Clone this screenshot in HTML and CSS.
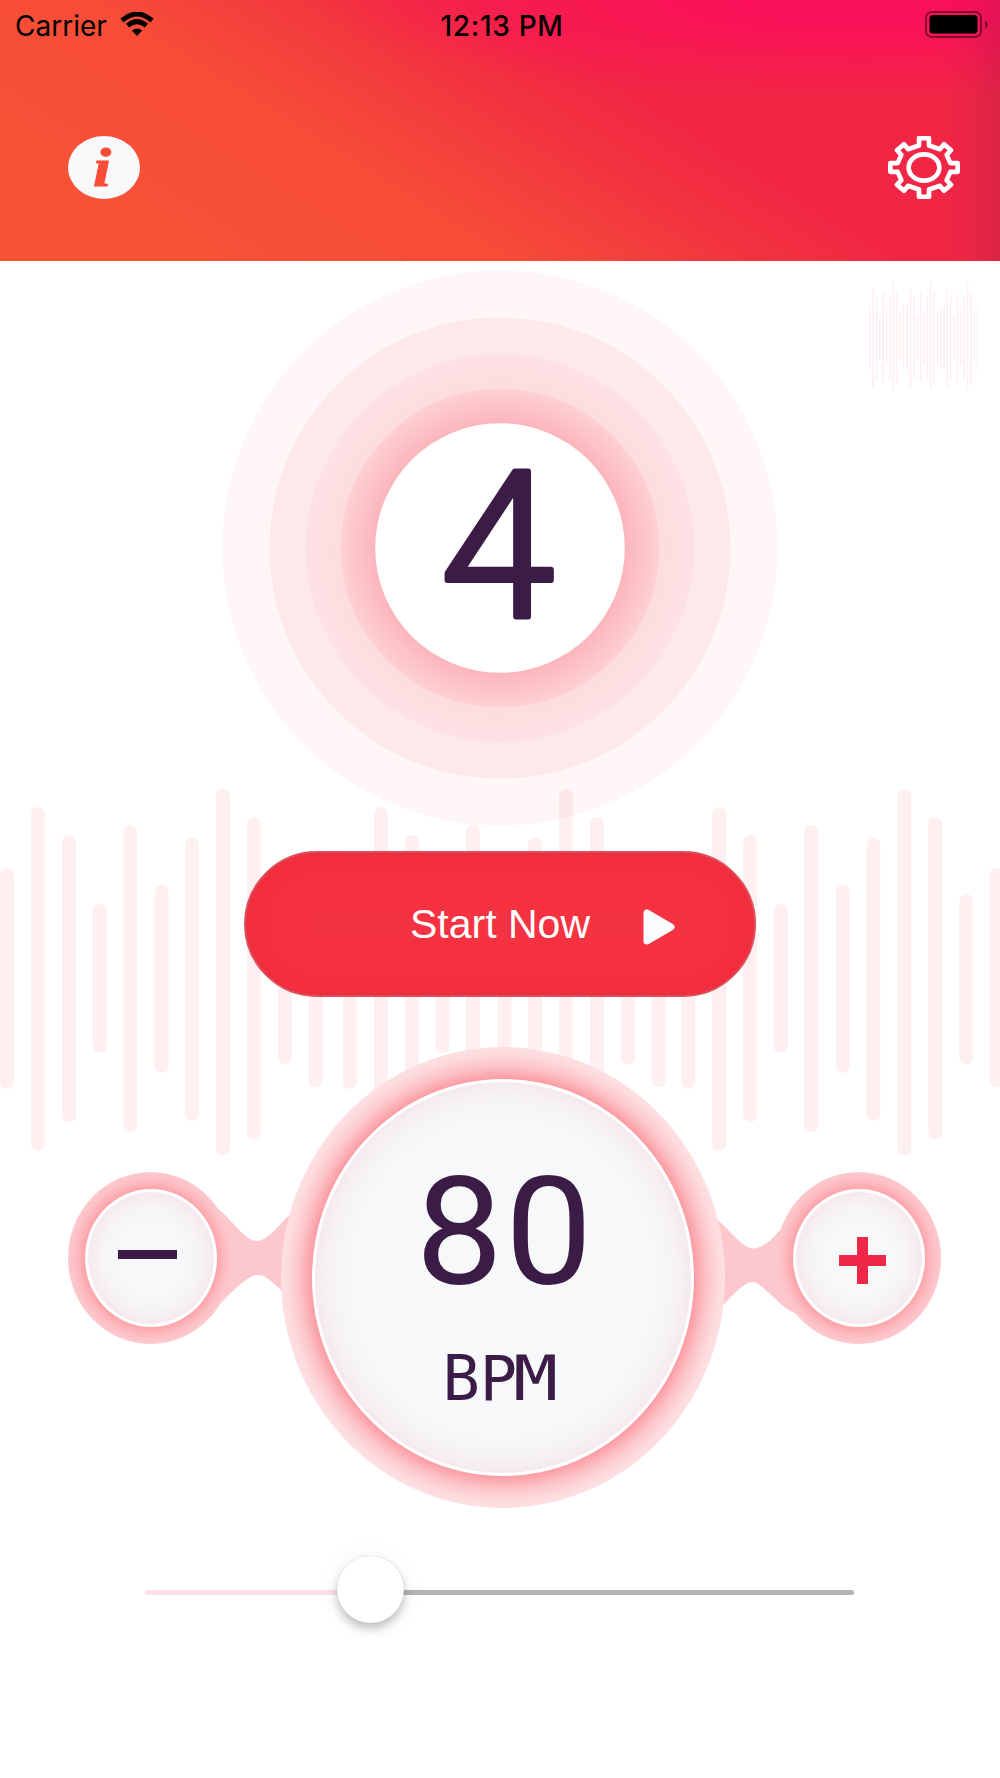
FILE: index.html
```html
<!DOCTYPE html>
<html lang="en">
<head>
    <meta charset="UTF-8">
    <meta name="viewport" content="width=device-width, initial-scale=1.0">
    <title>Metronome</title>
    <link rel="stylesheet" href="styles.css">
</head>
<body>
    <header class="header">
        <div class="status-bar">
            <div class="carrier">
                <span>Carrier</span>
                <svg class="wifi" viewBox="0 0 34 24">
                    <path d="M2 8.500Q17 -4.500 32 8.500" />
                    <path d="M7.600 13.700Q17 5.500 26.400 13.700" />
                    <path class="wifi-dot" d="M11.800 18.500Q17 14.500 22.200 18.500L17 24Z" />
                </svg>
            </div>
            <div class="time">12:13 PM</div>
            <svg class="battery" viewBox="0 0 64 28">
                <rect class="battery-case" x="1" y="1" width="55" height="25" rx="6" />
                <rect x="4.500" y="4" width="48" height="18.500" rx="3.500" />
                <path class="battery-tip" d="M60 9Q62.800 10.500 62.800 13.500T60 18Z" />
            </svg>
        </div>
        <nav class="nav">
            <svg class="icon" viewBox="0 0 72 63">
                <ellipse cx="36" cy="31.500" rx="36" ry="31.500" fill="#f9f9fb" />
                <text class="info-letter" transform="translate(25 50) scale(1.200 1)">i</text>
            </svg>
            <svg class="icon gear" viewBox="-108 -94.500 216 189">
                <path d="M-15 -88H15V-66L48 -55L60 -70L81 -52L68 -38L79 -13H101V13H79L68 38L81 52L60 70L48 55L15 66V88H-15V66L-48 55L-60 70L-81 52L-68 38L-79 13H-101V-13H-79L-68 -38L-81 -52L-60 -70L-48 -55L-15 -66Z" />
                <ellipse rx="46" ry="39.500" />
            </svg>
        </nav>
    </header>

    <main class="main">
        <svg class="wave" viewBox="0 0 1000 367" preserveAspectRatio="none">
            <defs>
                <g id="bars">
                    <rect x="0" y="79" width="14" height="221" rx="7" />
                    <rect x="31" y="18" width="14" height="344" rx="7" />
                    <rect x="62" y="46" width="14" height="287" rx="7" />
                    <rect x="92.500" y="115" width="14" height="149" rx="7" />
                    <rect x="123" y="36" width="14" height="307" rx="7" />
                    <rect x="154.500" y="96" width="14" height="188" rx="7" />
                    <rect x="185" y="49" width="14" height="283" rx="7" />
                    <rect x="216" y="0" width="14" height="366.500" rx="7" />
                    <rect x="247" y="28" width="14" height="322.500" rx="7" />
                    <rect x="278" y="105" width="14" height="170" rx="7" />
                    <rect x="308.500" y="79" width="14" height="219.500" rx="7" />
                </g>
                <g id="wave">
                    <use href="#bars" />
                    <use href="#bars" x="343" />
                    <use href="#bars" x="681.300" />
                </g>
            </defs>
            <use href="#wave" />
        </svg>
        <svg class="wave-small" viewBox="0 0 1000 367" preserveAspectRatio="none">
            <use href="#wave" />
        </svg>

        <section class="counter">
            <svg viewBox="0 0 556 556">
                <defs>
                    <radialGradient id="glow">
                        <stop offset="0.770" stop-color="#fbb4ba" />
                        <stop offset="1" stop-color="#fdd0d3" />
                    </radialGradient>
                    <radialGradient id="halo">
                        <stop offset="0.820" stop-color="#fddcde" />
                        <stop offset="1" stop-color="#fde1e5" />
                    </radialGradient>
                </defs>
                <circle cx="278" cy="278" r="277.700" fill="#ff3c50" fill-opacity="0.045" />
                <circle cx="278" cy="278" r="230.500" fill="#fee9ea" />
                <circle cx="278" cy="278" r="194" fill="url(#halo)" />
                <circle cx="278" cy="278" r="159.300" fill="url(#glow)" />
                <circle cx="278" cy="278" r="124.800" fill="#fff" />
                <text class="beat" x="275.500" y="346.500" text-anchor="middle">4</text>
            </svg>
        </section>

        <button class="start-btn">
            <span>Start Now</span>
            <svg class="play" viewBox="0 0 32 36">
                <path d="M4 4V32L28 18Z" />
            </svg>
        </button>

        <section class="tempo">
            <button class="round-btn">
                <span class="round-face"><i class="minus"></i></span>
            </button>
            <svg class="neck neck-left" viewBox="0 0 80 120">
                <path d="M0 8L6 13C20 27 30 41 40 41S60 27 80 7V105L65 91C52 79 48 75 40 75S18 89 6 101L0 106Z" />
            </svg>
            <div class="dial">
                <div class="dial-face">
                    <div class="bpm">80</div>
                    <div class="unit">BP<span>M</span></div>
                </div>
            </div>
            <svg class="neck neck-right" viewBox="0 0 85 120">
                <path d="M0 13L9 21C23 34 34 48.500 43 48.500C51 48.500 59 43 68 32L85 20V113C70 108 52 82 43 82S25 93 14 104L0 115Z" />
            </svg>
            <button class="round-btn">
                <span class="round-face"><i class="plus"></i></span>
            </button>
        </section>

        <div class="slider">
            <div class="slider-fill"></div>
            <div class="slider-thumb"></div>
            <div class="slider-rest"></div>
        </div>
    </main>
</body>
</html>
```

FILE: styles.css
```css
* {
    box-sizing: border-box;
}

body {
    margin: 0;
    width: 1000px;
    height: 1778px;
    overflow: hidden;
    background-color: #fff;
    font-family: Inter, "Liberation Sans", sans-serif;
}

button {
    border: none;
    padding: 0;
    cursor: pointer;
}

svg {
    display: block;
}

.header {
    height: 261px;
    background:
        linear-gradient(to right, transparent 94%, rgba(110, 25, 70, 0.05) 97%, rgba(110, 25, 70, 0.17)),
        radial-gradient(ellipse 540px 100px at 860px 0, #fb105a 20%, rgba(251, 16, 90, 0)),
        linear-gradient(32deg, #f75136 15%, #f74c38 36%, #f4403c 45%, #f3343f 53%, #f12644 64%);
}

/* status bar */
.status-bar {
    display: grid;
    grid-template-columns: 1fr auto 1fr;
    align-items: center;
    height: 50px;
    padding: 0 11px 0 15px;
    font-size: 28px;
}

.carrier {
    display: flex;
    align-items: center;
    gap: 13px;
    padding-top: 1px;
}

.wifi {
    width: 34px;
    height: 24px;
    margin-top: -3px;
    fill: none;
    stroke: #000;
    stroke-width: 5;
}

.wifi .wifi-dot {
    fill: #000;
    stroke: none;
}

.time {
    padding-top: 1px;
    font-weight: 500;
    letter-spacing: 0.7px;
}

.battery {
    width: 64px;
    height: 28px;
    margin-top: -1px;
    justify-self: end;
}

.battery-case {
    fill: none;
    stroke: rgba(0, 0, 0, 0.45);
    stroke-width: 2;
}

.battery-tip {
    fill: rgba(0, 0, 0, 0.45);
}

.nav {
    display: flex;
    justify-content: space-between;
    padding: 86px 40px 0 68px;
}

.icon {
    width: 72px;
    height: 63px;
}

.info-letter {
    font: italic bold 54px "Liberation Serif", serif;
    fill: #f84d38;
    stroke: #f84d38;
    stroke-width: 1;
    stroke-linejoin: round;
}

.gear {
    fill: none;
    stroke: #fff;
    stroke-width: 14;
    stroke-linejoin: round;
}

/* content */
.main {
    position: relative;
    display: flex;
    flex-direction: column;
    align-items: center;
}

.wave {
    position: absolute;
    top: 528px;
    left: 0;
    width: 1000px;
    height: 367px;
    fill: #feeff0;
}

.wave-small {
    position: absolute;
    top: 21px;
    right: 22px;
    width: 109px;
    height: 108px;
    fill: #feeff0;
}

.counter {
    position: relative;
    width: 556px;
    height: 556px;
    margin-top: 9px;
}

.beat {
    font-family: Roboto, sans-serif;
    font-size: 205px;
    font-weight: 300;
    fill: #3a1c47;
    stroke: #3a1c47;
    stroke-width: 6;
    stroke-linejoin: round;
}

.start-btn {
    position: relative;
    display: flex;
    align-items: center;
    width: 512px;
    height: 146px;
    margin-top: 25px;
    padding-left: 164px;
    border: 2px solid #dc4e5c;
    border-radius: 73px;
    background-color: #f53241;
    box-shadow: inset 0 0 45px #ed2b3b;
    color: #fff;
    font-family: "Liberation Sans", Arial, sans-serif;
    font-size: 41px;
}

.play {
    width: 32px;
    height: 36px;
    margin: 5px 0 0 53px;
    fill: #fafcff;
    stroke: #fafcff;
    stroke-width: 7;
    stroke-linejoin: round;
}

/* tempo */
.tempo {
    position: relative;
    display: flex;
    align-items: flex-start;
    align-self: flex-start;
    margin: 50px 0 0 68px;
}

.dial,
.round-btn {
    position: relative;
    z-index: 1;
    display: flex;
    justify-content: center;
    align-items: center;
    border-radius: 50%;
}

.dial {
    width: 444px;
    height: 461px;
    background: radial-gradient(closest-side, #fb9ba3 86%, #fcc5c9 92%, #fddadd 97%, #fde0e3);
}

.dial-face {
    width: 382px;
    height: 397px;
    padding-top: 88px;
    border: 3px solid #fff;
    border-radius: 50%;
    background-color: #f6f8fa;
    box-shadow: inset 0 0 36px #f5dde3;
    color: #3a1c47;
    text-align: center;
}

.bpm {
    height: 125px;
    padding-left: 4px;
    font-family: Roboto, sans-serif;
    font-size: 151px;
    line-height: 125px;
    letter-spacing: 2px;
    transform: scaleX(1.03);
}

.unit {
    margin-top: 48px;
    padding-right: 9px;
    font-family: "DejaVu Sans Mono", monospace;
    font-size: 62px;
    line-height: 72px;
}

.unit span {
    display: inline-block;
    transform: scaleX(1.2);
}

.round-btn {
    width: 165px;
    height: 172px;
    margin-top: 125px;
    background: radial-gradient(closest-side, #fca3aa 80%, #fcbcc1 90%, #fdc9cd);
}

.round-face {
    display: flex;
    justify-content: center;
    align-items: center;
    width: 132px;
    height: 138px;
    border: 3px solid #fff;
    border-radius: 50%;
    background-color: #f6f8fa;
    box-shadow: inset 0 0 28px #f5dde3;
}

.minus {
    width: 59px;
    height: 9px;
    margin: 0 7px 7px 0;
    background-color: #3a1c47;
}

.plus {
    width: 47px;
    height: 47px;
    margin: 5px 0 0 8px;
    background:
        linear-gradient(#f02847, #f02847) center / 47px 11px no-repeat,
        linear-gradient(#f02847, #f02847) center / 11px 47px no-repeat;
}

.neck {
    height: 120px;
    margin-top: 153px;
    fill: #fdc8cd;
}

.neck-left {
    width: 80px;
    margin-left: -16px;
    margin-right: -16px;
}

.neck-right {
    width: 85px;
    margin-left: -15px;
    margin-right: -19px;
}

/* slider */
.slider {
    display: flex;
    align-items: center;
    align-self: flex-start;
    width: 709px;
    height: 67px;
    margin: 48px 0 0 145px;
}

.slider-fill,
.slider-rest {
    height: 5px;
    margin-top: 6px;
    border-radius: 3px;
}

.slider-fill {
    width: 200px;
    margin-right: -8px;
    background-color: #fce0e3;
}

.slider-rest {
    flex: 1;
    margin-left: -8px;
    background-color: #b4b4b4;
}

.slider-thumb {
    position: relative;
    z-index: 1;
    width: 67px;
    height: 67px;
    border-radius: 50%;
    background-color: #fff;
    box-shadow: 0 6px 10px rgba(0, 0, 0, 0.22), 0 0 26px rgba(0, 0, 0, 0.05), 0 0 1px rgba(0, 0, 0, 0.2);
}
```
